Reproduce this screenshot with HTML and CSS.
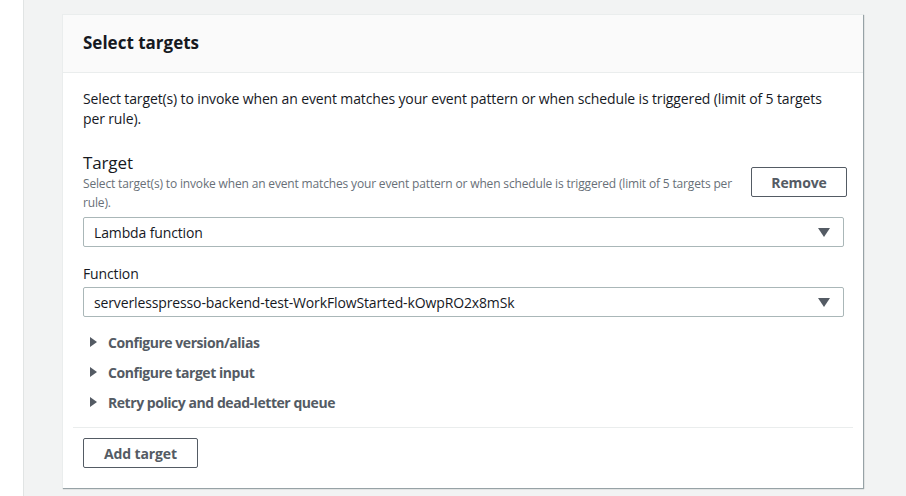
FILE: index.html
```html
<!DOCTYPE html>
<html>
<head>
<meta charset="utf-8">
<link rel="stylesheet" href="styles.css">
</head>
<body>
<div class="layout">
  <div class="gutter"></div>
  <main class="content">
    <section class="card">
      <header class="card-header">
        <h2 class="card-title">Select targets</h2>
      </header>
      <div class="card-body">
        <p class="intro">Select target(s) to invoke when an event matches your event pattern or when schedule is triggered (limit of 5 targets per rule).</p>
        <div class="target-head">
          <div class="target-text">
            <div class="target-label">Target</div>
            <div class="target-desc">Select target(s) to invoke when an event matches your event pattern or when schedule is triggered (limit of 5 targets per rule).</div>
          </div>
          <button class="btn">Remove</button>
        </div>
        <div class="select">
          <span class="select-value">Lambda function</span>
          <span class="caret"></span>
        </div>
        <div class="field-label">Function</div>
        <div class="select select-fn">
          <span class="select-value">serverlesspresso-backend-test-WorkFlowStarted-kOwpRO2x8mSk</span>
          <span class="caret"></span>
        </div>
        <ul class="expanders">
          <li class="expander"><span class="tri"></span>Configure version/alias</li>
          <li class="expander"><span class="tri"></span>Configure target input</li>
          <li class="expander"><span class="tri"></span>Retry policy and dead-letter queue</li>
        </ul>
      </div>
      <footer class="card-footer">
        <button class="btn">Add target</button>
      </footer>
    </section>
  </main>
</div>
</body>
</html>
```
FILE: styles.css
```css
* { box-sizing: border-box; }
html, body { margin: 0; padding: 0; height: 100%; }
body {
  font-family: "Open Sans", "Noto Sans", sans-serif;
  font-size: 14px;
  letter-spacing: -0.13px;
  color: #16191f;
  background: #ffffff;
}
.layout { display: flex; min-height: 100%; }
.gutter { width: 23px; flex: none; background: #ffffff; }
.content {
  flex: 1;
  background: #f2f3f3;
  border-left: 1px solid #e1e4e4;
  padding: 14px 0 0 38px;
}
.card {
  width: 801px;
  background: #ffffff;
  border-top: 1px solid #eaeded;
  border-left: 1px solid #eaeded;
  box-shadow: 1px 1px 1px 0 rgba(0,28,36,0.3), 1px 1px 1px 0 rgba(0,28,36,0.1);
}
.card-header {
  height: 58px;
  background: #fafafa;
  border-bottom: 1px solid #eaeded;
  display: flex;
  align-items: center;
  padding: 0 20px;
}
.card-title {
  margin: 0;
  font-size: 17px;
  font-weight: 700;
  line-height: 22px;
  padding-bottom: 2px;
  letter-spacing: 0;
}
.card-body { padding: 16px 19px 10px 20px; }
.intro { margin: 0 0 23px; line-height: 20px; }
.target-head { display: flex; align-items: center; gap: 8px; }
.target-text { flex: 1; }
.target-label { font-size: 17px; line-height: 22px; }
.target-desc { font-size: 12px; line-height: 19px; color: #687078; letter-spacing: -0.16px; }
.btn {
  font-family: inherit;
  font-size: 14px;
  letter-spacing: -0.13px;
  font-weight: 700;
  color: #545b64;
  background: #ffffff;
  border: 1px solid #545b64;
  border-radius: 2px;
  height: 30px;
  padding: 0 10px;
  flex: none;
}
.target-head .btn { width: 96px; margin-right: -3px; }
.select {
  margin-top: 5px;
  height: 30px;
  border: 1px solid #aab7b8;
  border-radius: 2px;
  display: flex;
  align-items: center;
  padding: 0 13px 0 10px;
}
.select-value { flex: 1; }
.caret {
  width: 0; height: 0;
  border-left: 6px solid transparent;
  border-right: 6px solid transparent;
  border-top: 9px solid #545b64;
}
.field-label { margin-top: 17px; line-height: 20px; }
.select-fn { margin-top: 3px; }
.expanders { list-style: none; margin: 10px 0 0; padding: 0; }
.expander {
  height: 30px;
  display: flex;
  align-items: center;
  font-weight: 700;
  color: #545b64;
  padding-left: 7px;
  letter-spacing: -0.45px;
}
.tri {
  width: 0; height: 0;
  border-top: 5px solid transparent;
  border-bottom: 5px solid transparent;
  border-left: 7px solid #545b64;
  margin-right: 11px;
}
.card-footer {
  margin: 0 10px 0 10px;
  border-top: 1px solid #eaeded;
  padding: 10px 10px 20px;
}
.card-footer .btn { width: 115px; }
```
